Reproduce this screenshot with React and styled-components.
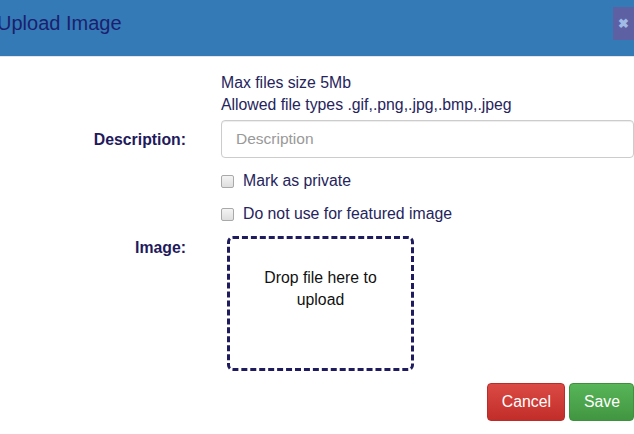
import React from 'react'
import styled, { createGlobalStyle } from 'styled-components'

const GlobalStyle = createGlobalStyle`
    html, body {
        margin: 0;
        padding: 0;
        background: #fff;
        overflow: hidden;
        font-family: "Liberation Sans", Arial, sans-serif;
    }
`

const Modal = styled.div`
    width: 667px;
    margin-left: -18px;
    background: #fff;
`

const ModalHeader = styled.div`
    height: 56px;
    padding: 0 15px;
    display: flex;
    align-items: center;
    justify-content: space-between;
    background: #337ab7;
    border-bottom: 1px solid #e5e5e5;
`

const Title = styled.h4`
    margin: 0;
    font-size: 20px;
    font-weight: normal;
    color: #1c1f6e;
    line-height: 1;
    margin-top: -10px;
`

const CloseButton = styled.button`
    width: 21px;
    height: 33px;
    margin-top: -9px;
    padding: 0;
    border: 0;
    background: #5d61a3;
    color: #9fbbe6;
    font-size: 13px;
    font-weight: bold;
    display: flex;
    align-items: center;
    justify-content: center;
    cursor: pointer;
`

const ModalBody = styled.div`
    padding: 15px 15px 14px;
    display: grid;
    grid-template-columns: 189px 1fr;
    column-gap: 35px;
    font-size: 15.8px;
    color: #25245c;
`

const Label = styled.label`
    display: block;
    font-weight: bold;
    text-align: right;
    color: #1f1a5c;
    padding-top: ${p => p.top || 0}px;
`

const Info = styled.div`
    line-height: 22px;
    margin-bottom: 4px;
`

const Input = styled.input`
    box-sizing: border-box;
    width: 100%;
    height: 38px;
    padding: 6px 14px;
    border: 1px solid #ccc;
    border-radius: 4px;
    font-family: inherit;
    font-size: 15.5px;
    color: #555;
    box-shadow: inset 0 1px 1px rgba(0,0,0,.075);
    &::placeholder {
        color: #999;
    }
`

const CheckRow = styled.label`
    display: flex;
    align-items: center;
    gap: 9px;
    height: 20px;
    margin-top: ${p => p.top}px;
`

const Check = styled.input.attrs({ type: 'checkbox' })`
    appearance: none;
    margin: 0;
    width: 13px;
    height: 13px;
    border: 1px solid #a9a9a9;
    border-radius: 2px;
    background: linear-gradient(#f4f4f4, #dedede);
`

const DropZone = styled.div`
    box-sizing: border-box;
    width: 187px;
    height: 135px;
    margin: 12px 0 0 6px;
    border: 3px dashed #1e1c5e;
    border-radius: 6px;
    padding: 28px 10px 0;
    text-align: center;
    color: #111;
    font-size: 15.8px;
    line-height: 22px;
`

const Footer = styled.div`
    grid-column: 1 / -1;
    display: flex;
    justify-content: flex-end;
    gap: 4px;
    margin-top: 12px;
`

const Button = styled.button`
    height: 38px;
    padding: 0 13px 0 14px;
    border: 1px solid ${p => p.border};
    border-radius: 4px;
    font-family: inherit;
    font-size: 15.8px;
    color: #fff;
    background: linear-gradient(${p => p.from}, ${p => p.to});
    cursor: pointer;
`

const App = () => (
    <Modal>
        <GlobalStyle />
        <ModalHeader>
            <Title>Upload Image</Title>
            <CloseButton>✖</CloseButton>
        </ModalHeader>
        <ModalBody>
            <div />
            <Info>
                Max files size 5Mb<br />
                Allowed file types .gif,.png,.jpg,.bmp,.jpeg
            </Info>

            <Label top={11}>Description:</Label>
            <Input placeholder="Description" />

            <div />
            <div>
                <CheckRow top={13}><Check />Mark as private</CheckRow>
                <CheckRow top={13}><Check />Do not use for featured image</CheckRow>
            </div>

            <Label top={15}>Image:</Label>
            <DropZone>Drop file here to upload</DropZone>

            <Footer>
                <Button from="#dc4a46" to="#c12e2a" border="#b92c28">Cancel</Button>
                <Button from="#58b558" to="#419641" border="#3e8f3e">Save</Button>
            </Footer>
        </ModalBody>
    </Modal>
)

export default App
